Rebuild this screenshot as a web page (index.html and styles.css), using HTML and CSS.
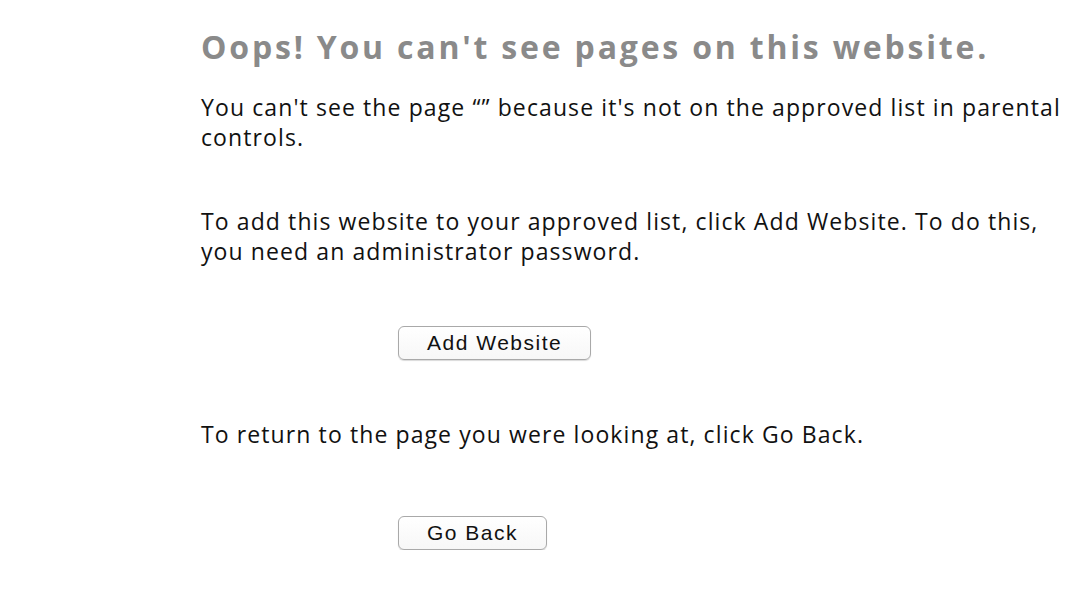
FILE: index.html
```html
<!DOCTYPE html>
<html lang="en">
<head>
  <meta charset="UTF-8">
  <title>Parental Controls</title>
  <link rel="stylesheet" href="styles.css">
</head>
<body>
  <div class="container">
    <h1>Oops! You can't see pages on this website.</h1>

    <p class="first">You can't see the page “” because it's not on the approved list in parental controls.</p>

    <p class="add-text">To add this website to your approved list, click Add Website. To do this, you need an administrator password.</p>

    <div class="action">
      <button id="add-website">Add Website</button>
    </div>

    <p class="back-text">To return to the page you were looking at, click Go Back.</p>

    <div class="action">
      <button id="go-back">Go Back</button>
    </div>
  </div>
</body>
</html>
```

FILE: styles.css
```css
body {
  margin: 0;
  background-color: #ffffff;
  font-family: "Open Sans", sans-serif;
  color: #111111;
}

.container {
  padding: 26px 0 0 201px;
  width: 865px;
}

h1 {
  margin: 0;
  font-size: 32px;
  line-height: 42px;
  letter-spacing: 2.8px;
  font-weight: bold;
  color: #8a8a8a;
  white-space: nowrap;
}

p {
  margin: 0;
  font-size: 23px;
  line-height: 30px;
  letter-spacing: 1.1px;
}

.first {
  margin-top: 24px;
}

.add-text {
  margin-top: 54px;
}

.action {
  padding-left: 197px;
  margin-top: 60px;
}

.action + .back-text {
  margin-top: 59px;
}

.back-text + .action {
  margin-top: 67px;
}

button {
  display: block;
  height: 34px;
  padding: 0 28px;
  font-family: "Liberation Sans", Arial, sans-serif;
  font-size: 21px;
  letter-spacing: 1.5px;
  color: #111111;
  background: linear-gradient(#ffffff, #f7f7f7);
  border: 1px solid #a9a9a9;
  border-radius: 6px;
  box-shadow: 0 1px 1px rgba(0, 0, 0, 0.15);
}
```
